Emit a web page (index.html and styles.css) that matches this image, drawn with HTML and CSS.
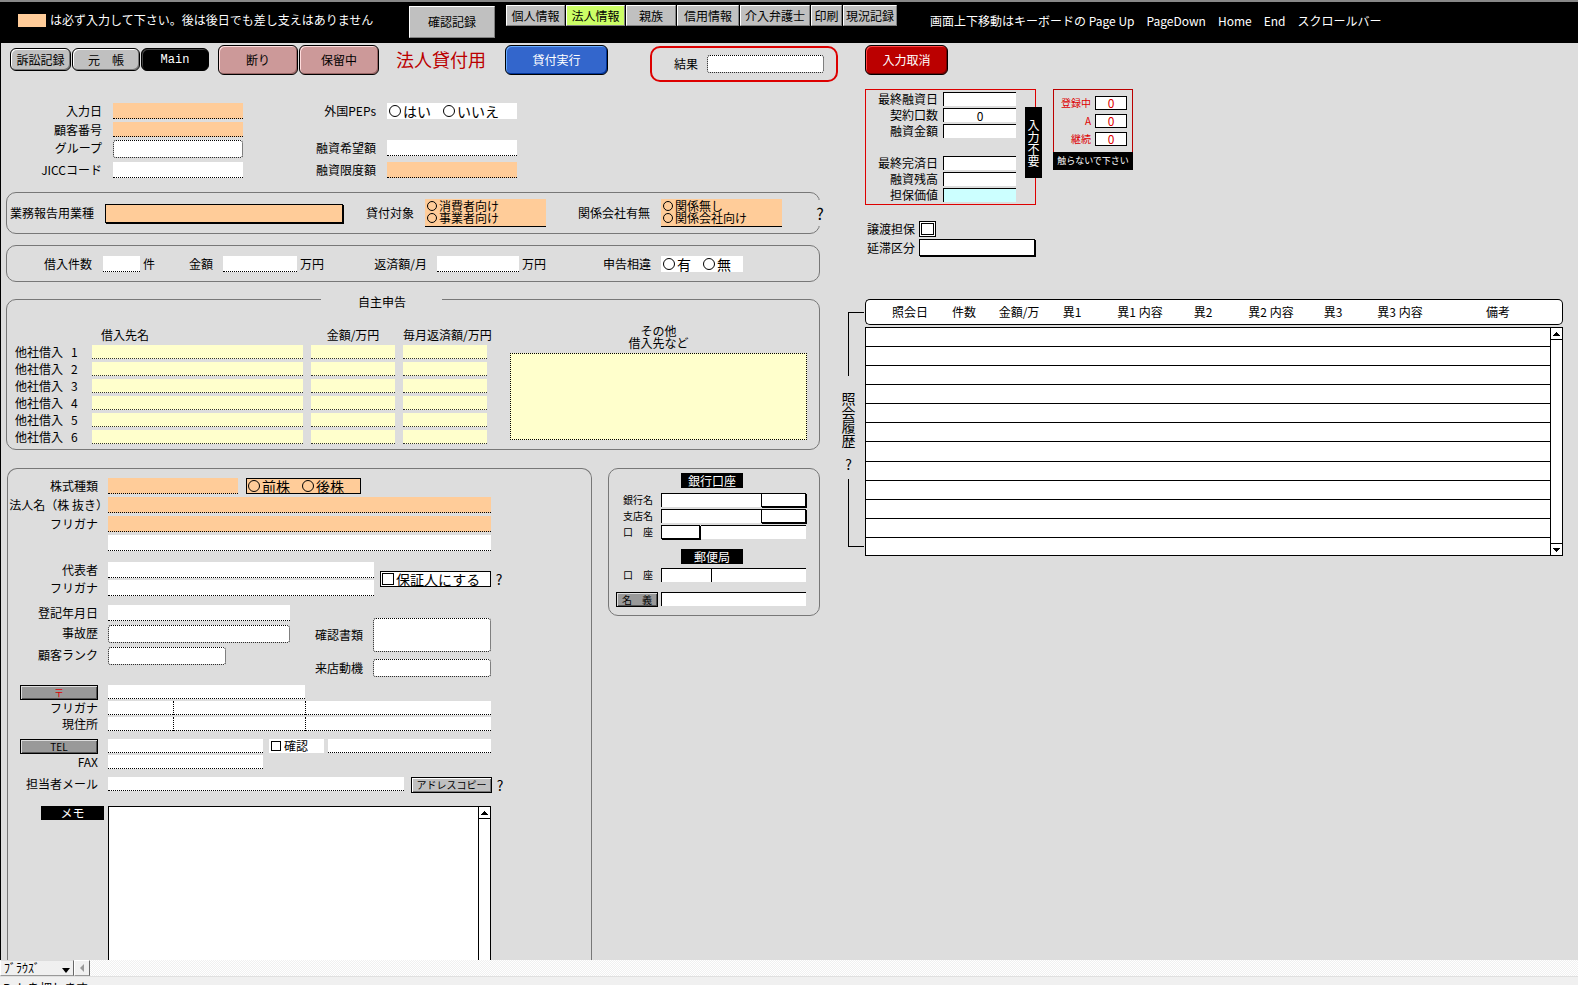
FILE: index.html
```html
<!DOCTYPE html>
<html lang="ja">
<head>
<meta charset="utf-8">
<title>法人情報</title>
<link rel="stylesheet" href="styles.css">
</head>
<body>
<header class="topbar">
  <p class="note"><span class="swatch"></span>は必ず入力して下さい。後は後日でも差し支えはありません</p>
  <button class="tab confirm">確認記録</button>
  <nav class="tabs">
    <button class="tab w59">個人情報</button>
    <button class="tab w59 active">法人情報</button>
    <button class="tab w50">親族</button>
    <button class="tab w62">信用情報</button>
    <button class="tab w70">介入弁護士</button>
    <button class="tab w31">印刷</button>
    <button class="tab w54">現況記録</button>
  </nav>
  <p class="hint"><span>画面上下移動はキーボードの Page Up</span><span>PageDown</span><span>Home</span><span>End</span><span>スクロールバー</span></p>
</header>

<main class="page">
  <div class="left">
    <div class="toolbar">
      <button class="pill p1">訴訟記録</button>
      <button class="pill p2">元　帳</button>
      <button class="pill p2 dark">Main</button>
      <button class="big pink first">断り</button>
      <button class="big pink">保留中</button>
      <h1 class="title">法人貸付用</h1>
      <button class="big blue">貸付実行</button>
      <div class="result"><label for="res">結果</label><select id="res" class="pop"></select></div>
    </div>

    <div class="basic">
      <label for="b1">入力日</label><input id="b1" class="f req">
      <span class="lab">外国PEPs</span>
      <div class="choice big-choice"><label><input type="radio" name="pep">はい</label><label><input type="radio" name="pep">いいえ</label></div>
      <label for="b2">顧客番号</label><input id="b2" class="f req short"><span></span><span></span>
      <label for="b3">グループ</label><select id="b3" class="pop"></select>
      <label for="b4">融資希望額</label><input id="b4" class="f">
      <label for="b5">JICCコード</label><input id="b5" class="f">
      <label for="b6">融資限度額</label><input id="b6" class="f req">
    </div>

    <section class="panel trade">
      <label class="lab" for="t1">業務報告用業種</label><select id="t1" class="drop req"></select>
      <span class="lab">貸付対象</span>
      <div class="stack"><label><input type="radio" name="tg">消費者向け</label><label><input type="radio" name="tg">事業者向け</label></div>
      <span class="lab">関係会社有無</span>
      <div class="stack"><label><input type="radio" name="rel">関係無し</label><label><input type="radio" name="rel">関係会社向け</label></div>
      <button class="help over">?</button>
    </section>

    <section class="panel loans">
      <label class="lab" for="l1">借入件数</label><input id="l1" class="f">
      <div class="between"><span>件</span><label for="l2">金額</label></div><input id="l2" class="f">
      <div class="between"><span>万円</span><label for="l3">返済額/月</label></div><input id="l3" class="f">
      <div class="between"><span>万円</span><span>申告相違</span></div>
      <div class="choice big-choice"><label><input type="radio" name="df">有</label><label><input type="radio" name="df">無</label></div>
    </section>

    <fieldset class="declare">
      <legend>自主申告</legend>
      <div class="declare-body">
        <table class="debts">
          <thead><tr><th></th><th class="name">借入先名</th><th class="amt">金額/万円</th><th class="amt">毎月返済額/万円</th></tr></thead>
          <tbody>
            <tr><th>他社借入<span>1</span></th><td><input class="f" aria-label="借入先名 1"></td><td><input class="f" aria-label="金額 1"></td><td><input class="f" aria-label="毎月返済額 1"></td></tr>
            <tr><th>他社借入<span>2</span></th><td><input class="f" aria-label="借入先名 2"></td><td><input class="f" aria-label="金額 2"></td><td><input class="f" aria-label="毎月返済額 2"></td></tr>
            <tr><th>他社借入<span>3</span></th><td><input class="f" aria-label="借入先名 3"></td><td><input class="f" aria-label="金額 3"></td><td><input class="f" aria-label="毎月返済額 3"></td></tr>
            <tr><th>他社借入<span>4</span></th><td><input class="f" aria-label="借入先名 4"></td><td><input class="f" aria-label="金額 4"></td><td><input class="f" aria-label="毎月返済額 4"></td></tr>
            <tr><th>他社借入<span>5</span></th><td><input class="f" aria-label="借入先名 5"></td><td><input class="f" aria-label="金額 5"></td><td><input class="f" aria-label="毎月返済額 5"></td></tr>
            <tr><th>他社借入<span>6</span></th><td><input class="f" aria-label="借入先名 6"></td><td><input class="f" aria-label="金額 6"></td><td><input class="f" aria-label="毎月返済額 6"></td></tr>
          </tbody>
        </table>
        <div class="others"><label for="oth">その他<br>借入先など</label><textarea id="oth"></textarea></div>
      </div>
    </fieldset>

    <div class="lower">
      <section class="panel company">
        <div class="group g3">
          <div class="row"><label for="c1">株式種類</label><input id="c1" class="f req w130">
            <div class="choice big-choice boxed req"><label><input type="radio" name="kb">前株</label><label><input type="radio" name="kb">後株</label></div></div>
          <div class="row"><label class="wide" for="c2">法人名（株 抜き）</label><input id="c2" class="f req w383"></div>
          <div class="row"><label for="c3">フリガナ</label><input id="c3" class="f req w383"></div>
          <div class="row"><span class="lab"></span><input class="f w383" aria-label="法人名補足"></div>
        </div>
        <div class="side">
          <div class="group g2">
            <div class="row"><label for="c4">代表者</label><input id="c4" class="f w266"></div>
            <div class="row"><label for="c5">フリガナ</label><input id="c5" class="f w266"></div>
          </div>
          <label class="guarantor"><input type="checkbox">保証人にする</label>
          <button class="help">?</button>
        </div>
        <div class="side top">
          <div class="group g4 dates">
            <div class="row"><label for="c6">登記年月日</label><input id="c6" class="f w181"></div>
            <div class="row"><label for="c7">事故歴</label><select id="c7" class="pop w181"></select></div>
            <div class="row"><label for="c8">顧客ランク</label><select id="c8" class="pop w118"></select></div>
          </div>
          <div class="papers">
            <label for="c9">確認書類</label><select id="c9" class="pop tall"></select>
            <label for="c10">来店動機</label><select id="c10" class="pop"></select>
          </div>
        </div>
        <div class="group g2 thin">
          <div class="row"><button class="slab post">〒</button><input class="f w197" aria-label="郵便番号"></div>
          <div class="row"><label for="a1">フリガナ</label><div class="addr"><input id="a1" class="f"><input class="f" aria-label="フリガナ 2"><input class="f" aria-label="フリガナ 3"></div></div>
          <div class="row"><label for="a2">現住所</label><div class="addr"><input id="a2" class="f"><input class="f" aria-label="現住所 2"><input class="f" aria-label="現住所 3"></div></div>
        </div>
        <div class="group g2 thin">
          <div class="row"><button class="slab">TEL</button><input class="f w155" aria-label="TEL"><label class="check"><input type="checkbox">確認</label><input class="f w163" aria-label="TEL 備考"></div>
          <div class="row"><label for="a3">FAX</label><input id="a3" class="f w155"></div>
        </div>
        <div class="row thin mail"><label for="a4">担当者メール</label><input id="a4" class="f w296"><button class="slab copy">アドレスコピー</button><button class="help">?</button></div>
        <div class="row memo"><label for="memo"><span class="tag">メモ</span></label>
          <div class="memo-box"><textarea id="memo"></textarea><div class="scroll"><button aria-label="上へ"><svg viewBox="0 0 7 4"><path d="M3 0h1v1h1v1h1v1h1v1H0V3h1V2h1V1h1z"/></svg></button></div></div></div>
      </section>

      <section class="panel bank">
        <h2 class="tag">銀行口座</h2>
        <div class="bank-rows">
          <label for="k1">銀行名</label><div class="pair"><input id="k1" class="s"><select class="drop w46" aria-label="銀行コード"></select></div>
          <label for="k2">支店名</label><div class="pair"><input id="k2" class="s"><select class="drop w46" aria-label="支店コード"></select></div>
          <label for="k3">口　座</label><div class="pair"><select id="k3" class="drop w40"></select><input class="s plain" aria-label="口座番号"></div>
        </div>
        <h2 class="tag post-tag">郵便局</h2>
        <div class="bank-rows"><label for="k4">口　座</label><div class="pair"><input id="k4" class="s w50f"><input class="s" aria-label="番号"></div></div>
        <div class="bank-rows holder"><button class="slab">名　義</button><input class="s" aria-label="名義"></div>
      </section>
    </div>
  </div>

  <div class="right">
    <div class="indent">
      <button class="big red">入力取消</button>
      <div class="info">
        <section class="summary">
          <label for="s1">最終融資日</label><input id="s1" class="s">
          <label for="s2">契約口数</label><input id="s2" class="s" value="0">
          <label for="s3">融資金額</label><input id="s3" class="s">
          <span></span><span></span>
          <label for="s4">最終完済日</label><input id="s4" class="s">
          <label for="s5">融資残高</label><input id="s5" class="s">
          <label for="s6">担保価値</label><input id="s6" class="s cyan">
          <strong class="vert">入力不要</strong>
        </section>
        <section class="locked">
          <div class="counts">
            <label for="n1">登録中</label><input id="n1" value="0">
            <label for="n2">A</label><input id="n2" value="0">
            <label for="n3">継続</label><input id="n3" value="0">
          </div>
          <p>触らないで下さい</p>
        </section>
      </div>
      <div class="pledge">
        <label for="p1">譲渡担保</label><span class="dbl"><input id="p1" type="checkbox"></span>
        <label for="p2">延滞区分</label><select id="p2" class="drop"></select>
      </div>
    </div>
    <div class="log">
      <div class="bracket"><i class="up"></i><b>照会履歴</b><button class="help">?</button><i class="down"></i></div>
      <table class="history">
        <colgroup><col class="h1"><col class="h2"><col class="h3"><col class="h4"><col class="h5"><col class="h6"><col class="h7"><col class="h8"><col class="h9"><col><col class="h11"></colgroup>
        <thead><tr><th>照会日</th><th>件数</th><th>金額/万</th><th>異1</th><th>異1 内容</th><th>異2</th><th>異2 内容</th><th>異3</th><th>異3 内容</th><th class="remark">備考</th><th></th></tr></thead>
        <tbody>
          <tr><td colspan="10"></td><td class="bar" rowspan="12"><div class="scroll full"><button aria-label="上へ"><svg viewBox="0 0 7 4"><path d="M3 0h1v1h1v1h1v1h1v1H0V3h1V2h1V1h1z"/></svg></button><button aria-label="下へ"><svg viewBox="0 0 7 4"><path d="M0 0h7v1H6v1H5v1H4v1H3V3H2V2H1V1H0z"/></svg></button></div></td></tr>
          <tr><td colspan="10"></td></tr><tr><td colspan="10"></td></tr><tr><td colspan="10"></td></tr>
          <tr><td colspan="10"></td></tr><tr><td colspan="10"></td></tr><tr><td colspan="10"></td></tr>
          <tr><td colspan="10"></td></tr><tr><td colspan="10"></td></tr><tr><td colspan="10"></td></tr>
          <tr><td colspan="10"></td></tr><tr><td colspan="10"></td></tr>
        </tbody>
      </table>
    </div>
  </div>
</main>

<footer>
  <div class="modebar">
    <div class="mode"><select aria-label="モード"><option>ﾌﾞﾗｳｽﾞ</option></select><svg viewBox="0 0 8 5"><path d="M0 0h8L4 5z"/></svg></div>
    <button class="prev" aria-label="左へ"><svg viewBox="0 0 4 8"><path d="M4 0v8L0 4z"/></svg></button>
    <div class="track"></div>
  </div>
  <p class="status">Rub を押します</p>
</footer>
</body>
</html>
```
FILE: styles.css
```css
* { box-sizing: border-box; }
body, p, h1, h2, fieldset, legend { margin: 0; padding: 0; }
body {
  height: 100vh;
  overflow: hidden;
  display: flex;
  flex-direction: column;
  background: #ddd;
  color: #000;
  font: 12px/16px "Noto Sans CJK JP", sans-serif;
}
button, input, select, textarea {
  font: inherit;
  color: inherit;
  margin: 0;
  padding: 0;
  border-radius: 0;
  appearance: none;
}
button { white-space: nowrap; line-height: 12px; }
label, span, th { white-space: nowrap; }

/* top bar */
.topbar {
  flex: none;
  display: grid;
  grid-template-columns: 391px 97px auto 1fr;
  align-items: start;
  height: 43px;
  padding-left: 18px;
  border-top: 2px solid #888;
  background: #000;
  color: #fff;
}
.note { display: flex; align-items: center; gap: 4px; margin-top: 10px; white-space: nowrap; }
.swatch { width: 28px; height: 13px; background: #fc9; }
.tab {
  height: 21px;
  background: #c0c0c0;
  color: #000;
  border: 1px solid;
  border-color: #fff #808080 #808080 #fff;
}
.tab.active { background: #cf6; }
.confirm { width: 86px; height: 32px; margin-top: 4px; }
.tabs { display: flex; gap: 1px; margin-top: 3px; }
.w59 { width: 59px; }
.w50 { width: 50px; }
.w62 { width: 62px; }
.w70 { width: 70px; }
.w31 { width: 31px; }
.w54 { width: 54px; }
.hint { display: flex; gap: 12px; margin: 11px 0 0 33px; white-space: nowrap; }

/* page */
.page {
  flex: 1;
  min-height: 0;
  overflow: hidden;
  display: grid;
  grid-template-columns: 839px minmax(0, 1fr);
  border-left: 1px solid #000;
}
.left { display: flex; flex-direction: column; min-height: 0; }

.toolbar { display: flex; align-items: flex-start; height: 60px; padding: 2px 0 0 9px; }
.pill, .big {
  border: 1px solid #000;
  border-radius: 6px;
}
.pill {
  height: 23px;
  margin: 3px 1px 0 0;
  background: #c0c0c0;
  box-shadow: inset 1px 1px #fff, inset -1px -1px #777;
}
.p1 { width: 61px; }
.p2 { width: 68px; }
.pill.dark { background: #000; color: #fff; box-shadow: inset 1px 1px #444; font-family: "Liberation Mono", monospace; }
.big { height: 30px; }
.pink { width: 80px; margin-right: 1px; background: #c99; box-shadow: inset 1px 1px #fdd, inset -1px -1px #966; }
.pink.first { margin-left: 8px; }
.title { margin: 4px 19px 0 16px; font-size: 18px; line-height: 20px; font-weight: 400; color: #b00; white-space: nowrap; }
.blue { width: 103px; background: #36c; color: #fff; box-shadow: inset 1px 1px #6af, inset -1px -1px #039; }
.red { width: 83px; background: #b00; color: #fff; box-shadow: inset 1px 1px #f44, inset -1px -1px #700; }
.result {
  display: flex;
  align-items: center;
  gap: 9px;
  width: 188px;
  height: 36px;
  margin: 1px 0 0 42px;
  padding-left: 22px;
  border: 2px solid #d00;
  border-radius: 10px;
}
.result .pop { width: 117px; }

/* fields */
.f { height: 16px; padding: 0 3px; border: 0; border-bottom: 1px dotted #000; background: #fff; }
.s { height: 14px; min-width: 0; padding: 0 3px; border: solid #000; border-width: 1px 0 0 1px; background: #fff; }
.pop { height: 18px; border: 1px dotted #000; border-radius: 3px; background: #fff; }
.drop { height: 14px; border: 1px solid #000; background: #fff; box-shadow: 1px 1px #000; }
.req { background: #fc9; }
.short { height: 15px; }
.w130 { width: 130px; }
.w383 { width: 383px; }
.w266 { width: 266px; }
.w181 { width: 182px; }
.w118 { width: 118px; }
.w197 { width: 197px; }
.w155 { width: 155px; }
.w163 { width: 163px; }
.w296 { width: 296px; }
.w46 { width: 45px; }
.w40 { width: 39px; }
.lab { text-align: right; padding-right: 11px; }

input[type="radio"], input[type="checkbox"] { flex: none; border: 1px solid #000; }
input[type="radio"] { border-radius: 50%; }
input[type="radio"]:checked, input[type="checkbox"]:checked { background: #000; }
.choice { display: flex; align-items: center; height: 16px; padding-left: 2px; background: #fff; }
.choice.req { background: #fc9; }
.choice label { display: flex; align-items: center; gap: 2px; }
.big-choice { gap: 12px; font-size: 14px; }
.big-choice input { width: 12px; height: 12px; }
.boxed { width: 115px; margin-left: 8px; padding-left: 1px; border: 1px solid #000; }
.help { width: 12px; background: none; border: 0; font-size: 14px; line-height: 16px; }

/* basic data */
.basic {
  display: grid;
  grid-template-columns: 102px 130px 124px 130px;
  grid-template-rows: 19px 18px 22px 16px;
  column-gap: 10px;
  align-items: start;
}
.basic > label, .basic > .lab { padding-right: 1px; text-align: right; }

/* panels */
.panel { border: 1px solid #777; border-radius: 10px; }
.trade, .loans { display: grid; align-items: center; width: 814px; margin-left: 5px; }
.trade {
  position: relative;
  grid-template-columns: 98px 239px 81px 121px 115px 121px;
  height: 42px;
  margin-top: 14px;
}
.trade .drop { height: 19px; margin-right: 1px; }
.trade .drop.req { background: #fc9; }
.stack { height: 28px; padding: 1px 0 0 2px; border-bottom: 1px solid #000; background: #fc9; line-height: 12px; }
.stack label { display: flex; align-items: center; gap: 2px; height: 12px; }
.stack input { width: 10px; height: 10px; }
.over { position: absolute; right: -7px; top: 7px; height: 26px; background: #ddd; font-size: 16px; }
.loans {
  grid-template-columns: 96px 37px 83px 74px 140px 82px 142px 82px;
  height: 37px;
  margin-top: 11px;
}
.between { display: flex; justify-content: space-between; padding: 0 10px 0 3px; }

/* self declaration */
.declare { width: 814px; margin: 8px 0 0 5px; border: 1px solid #777; border-radius: 10px; }
.declare legend { width: 121px; height: 18px; margin-left: 314px; padding: 5px 0 0 37px; line-height: 13px; }
.declare-body { display: flex; gap: 15px; padding: 17px 0 2px; }
.debts { border-spacing: 8px 3px; }
.debts th, .debts td { height: 14px; padding: 0; line-height: 14px; font-weight: 400; text-align: left; }
.debts tbody th { width: 69px; }
.debts th span { margin-left: 8px; }
.debts .name { width: 211px; padding-left: 9px; }
.debts .amt { width: 84px; max-width: 84px; text-align: center; }
.debts .f { display: block; width: 100%; height: 14px; background: #ffc; border-bottom-color: #333; }
.others { width: 297px; text-align: center; line-height: 12px; }
.others textarea { display: block; width: 100%; height: 87px; margin-top: 4px; border: 1px dotted #000; background: #ffc; resize: none; }
.others label { display: block; }

/* company */
.lower { flex: 1; min-height: 0; display: flex; align-items: flex-start; gap: 16px; margin-top: 18px; padding-left: 6px; }
.company {
  display: flex;
  flex-direction: column;
  align-self: stretch;
  width: 585px;
  padding-top: 9px;
  border-bottom: 0;
  border-radius: 10px 10px 0 0;
}
.group { display: flex; flex-direction: column; }
.g2 { gap: 2px; }
.g3 { gap: 3px; }
.g4 { gap: 4px; }
.row { display: flex; }
.row > label:first-child, .row > .lab { width: 100px; flex: none; padding-right: 10px; text-align: right; }
.row > label.wide:first-child { padding-right: 0; }
.side { display: flex; align-items: center; margin-top: 11px; }
.side.top { align-items: flex-start; margin-top: 9px; }
.guarantor {
  display: flex;
  align-items: center;
  gap: 2px;
  width: 111px;
  height: 16px;
  margin: 0 2px 0 6px;
  padding-left: 1px;
  border: 1px solid #000;
  background: #fff;
  font-size: 14px;
}
.guarantor input { width: 12px; height: 12px; }
.dates { width: 282px; }
.papers { display: grid; grid-template-columns: 83px 118px; row-gap: 7px; align-items: center; margin-top: 13px; }
.papers label { padding-right: 10px; text-align: right; }
.papers .tall { height: 34px; }
.thin { margin-top: 8px; }
.thin .row, .row.thin { line-height: 14px; }
.thin .f { height: 14px; }
.slab {
  width: 78px;
  height: 15px;
  border: 1px solid #000;
  background: #999;
  box-shadow: inset 1px 1px #ddd, inset -1px -1px #555;
  font-size: 10px;
  line-height: 10px;
}
.row > .slab:first-child { margin: 0 10px 0 12px; }
.thin .row > .slab { margin-bottom: -1px; }
.post { color: #d00; }
.addr { display: grid; grid-template-columns: 65px 132px 186px; }
.addr .f + .f { border-left: 1px dotted #000; }
.check { display: flex; align-items: center; gap: 3px; width: 55px; height: 14px; margin: 0 4px 0 6px; padding-left: 2px; background: #fff; }
.check input { width: 10px; height: 10px; }
.slab.copy { width: 81px; height: 16px; margin: 0 2px 0 7px; background: #c0c0c0; box-shadow: inset 1px 1px #fff, inset -1px -1px #777; }
.tag { background: #000; color: #fff; font-size: 12px; line-height: 15px; font-weight: 400; text-align: center; }
.memo { flex: 1; min-height: 0; margin-top: 13px; }
.memo > label:first-child { padding: 0 4px 0 33px; }
.memo .tag { display: block; line-height: 14px; }
.memo-box { display: flex; width: 383px; border: 1px solid #000; border-bottom: 0; background: #fff; }
.memo-box textarea { flex: 1; border: 0; background: none; resize: none; }
.scroll { display: flex; flex-direction: column; justify-content: space-between; width: 12px; border-left: 1px solid #000; }
.scroll button { display: flex; align-items: center; justify-content: center; width: 100%; height: 12px; border: 0; border-bottom: 1px solid #000; background: #fff; }
.scroll button + button { border-top: 1px solid #000; border-bottom: 0; }
.scroll svg { width: 7px; height: 4px; }

/* bank */
.bank { width: 212px; height: 148px; padding: 4px 0 0 7px; }
.bank .tag { width: 62px; margin-left: 65px; }
.bank .post-tag { margin-top: 10px; }
.bank-rows { display: grid; grid-template-columns: 45px 145px; row-gap: 2px; margin-top: 5px; font-size: 10px; line-height: 14px; }
.bank-rows label { padding-left: 7px; }
.pair { display: flex; }
.pair .s { flex: 1; }
.pair .w50f { flex: none; width: 50px; }
.pair .plain { border-left: 0; margin-left: 1px; }
.post-tag + .bank-rows { margin-top: 4px; }
.bank-rows.holder { margin-top: 10px; }
.holder .slab { width: 42px; }

/* right side */
.indent { padding: 2px 0 0 25px; }
.info { display: flex; gap: 17px; margin-top: 14px; }
.summary {
  position: relative;
  display: grid;
  grid-template-columns: 77px 73px;
  grid-auto-rows: 14px;
  row-gap: 2px;
  width: 171px;
  padding: 2px 0;
  border: 1px solid #d00;
  line-height: 14px;
}
.summary label { padding-right: 5px; text-align: right; }
.summary .s { text-align: center; }
.summary .cyan { background: #cff; }
.vert {
  position: absolute;
  right: -7px;
  top: 17px;
  width: 17px;
  height: 71px;
  background: #000;
  color: #fff;
  font-weight: 400;
  line-height: 17px;
  text-align: center;
  writing-mode: vertical-rl;
}
.locked { width: 80px; height: 81px; font-size: 10px; }
.counts {
  display: grid;
  grid-template-columns: 41px 32px;
  grid-auto-rows: 14px;
  row-gap: 4px;
  height: 63px;
  padding-top: 6px;
  border: 1px solid #b00;
  border-bottom: 0;
  color: #d00;
  line-height: 14px;
}
.counts label { padding-right: 4px; text-align: right; }
.counts input { border: 1px solid #000; background: #fff; text-align: center; font-size: 12px; }
.locked p { height: 18px; background: #000; color: #fff; font-size: 9px; line-height: 18px; text-align: center; white-space: nowrap; }
.pledge { display: grid; grid-template-columns: 54px 117px; row-gap: 2px; align-items: center; margin-top: 16px; }
.pledge label { padding-right: 4px; text-align: right; }
.dbl { display: flex; width: 17px; height: 16px; padding: 1px; border: 1px solid #000; background: #fff; }
.dbl input { flex: 1; }
.pledge .drop { height: 17px; margin-right: 1px; }

.log { display: grid; grid-template-columns: 25px minmax(0, 1fr); margin: 43px 15px 0 0; }
.bracket { display: flex; flex-direction: column; align-items: center; padding-top: 13px; }
.bracket i { align-self: flex-end; width: 16px; margin-right: 1px; border-left: 1px solid #000; }
.bracket .up { height: 64px; border-top: 1px solid #000; }
.bracket .down { height: 68px; margin-top: 7px; border-bottom: 1px solid #000; }
.bracket b { height: 56px; margin: 16px 8px 0 0; font-size: 14px; line-height: 16px; font-weight: 400; writing-mode: vertical-rl; }
.bracket .help { margin: 8px 8px 0 0; }
.history { width: 100%; table-layout: fixed; border-spacing: 0; }
.history th { height: 26px; padding: 0; border: solid #000; border-width: 1px 0; background: #fff; font-weight: 400; line-height: 12px; }
.history th:first-child { padding-left: 16px; border-left-width: 1px; border-radius: 5px 0 0 5px; }
.history th:last-child { border-right-width: 1px; border-radius: 0 5px 5px 0; }
.history th.remark { padding-right: 8px; }
.history tbody::before { content: ""; display: block; height: 2px; }
.history td { height: 19px; padding: 0; border: solid #000; border-width: 1px 0 0 1px; background: #fff; }
.history tr:last-child td, .history td.bar { border-bottom-width: 1px; }
.history td.bar { height: 229px; border-right-width: 1px; }
.scroll.full { width: 100%; height: 227px; border-left: 0; }
.h1 { width: 73px; }
.h2 { width: 52px; }
.h3 { width: 58px; }
.h4 { width: 48px; }
.h5 { width: 88px; }
.h6 { width: 38px; }
.h7 { width: 98px; }
.h8 { width: 26px; }
.h9 { width: 108px; }
.h11 { width: 13px; }

/* footer */
footer { flex: none; height: 25px; overflow: hidden; background: #f0f0f0; }
.modebar { display: flex; height: 17px; border-bottom: 1px solid #e0e0e0; }
.mode { position: relative; width: 74px; border: 1px solid; border-color: #ddd #666 #999 #fff; }
.mode select { display: block; width: 100%; height: 14px; padding-left: 3px; border: 0; background: #f0f0f0; line-height: 14px; }
.mode svg { position: absolute; right: 3px; bottom: 2px; width: 8px; height: 5px; pointer-events: none; }
.prev { display: flex; align-items: center; justify-content: center; width: 16px; border: 1px solid; border-color: #fff #666 #999 #fff; background: #f0f0f0; }
.prev svg { width: 4px; height: 8px; fill: #999; }
.track { flex: 1; background: repeating-conic-gradient(#f0f0f0 0 25%, #fff 0 50%) 0 0 / 2px 2px; }
.status { margin-top: 4px; padding-left: 3px; line-height: 14px; }
```
